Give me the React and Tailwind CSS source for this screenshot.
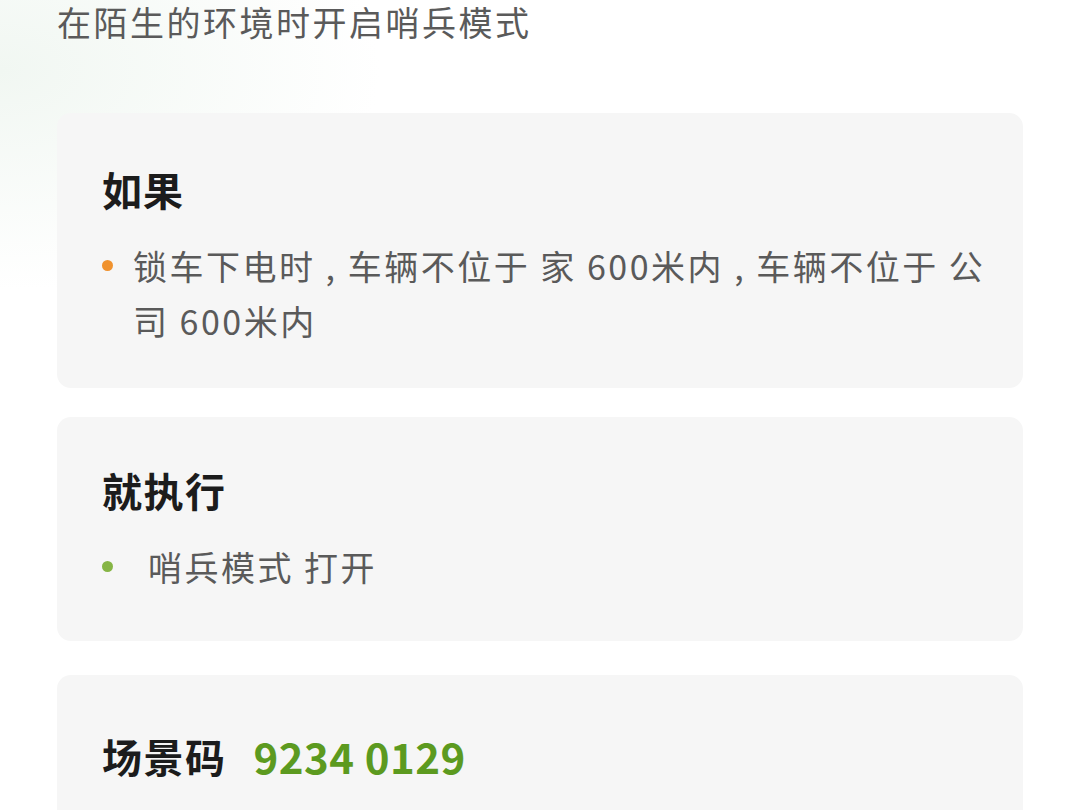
export default function App() {
  return (
    <div
      className="w-[1080px] h-[810px] overflow-hidden bg-white bg-[radial-gradient(ellipse_380px_220px_at_0px_70px,#f1f7f2_0%,rgba(255,255,255,0)_100%)] px-[57px]"
      style={{ fontFamily: '"Noto Sans CJK SC", "Noto Sans", sans-serif' }}
    >
      <div className="text-[34px] leading-[44px] text-[#5a5a5a] tracking-[2.5px] whitespace-nowrap">
        在陌生的环境时开启哨兵模式
      </div>

      <div className="mt-[69px] rounded-[14px] bg-[#f6f6f6] pl-[45px] pr-[28px] pt-[52px] pb-[40px]">
        <div className="text-[40px] leading-[48px] font-bold text-[#1c1c1c] tracking-[1px]">如果</div>
        <div className="mt-[25px] flex">
          <div className="w-[31px] shrink-0 pt-[22px]">
            <div className="w-[11px] h-[11px] rounded-full bg-[#f0922e]" />
          </div>
          <div className="text-[34px] leading-[55px] text-[#5a5a5a] tracking-[2.5px]">
            锁车下电时 , 车辆不位于 家 600米内 , 车辆不位于 公司 600米内
          </div>
        </div>
      </div>

      <div className="mt-[29px] rounded-[14px] bg-[#f6f6f6] pl-[45px] pr-[40px] pt-[49px] pb-[47px]">
        <div className="text-[40px] leading-[48px] font-bold text-[#1c1c1c] tracking-[1.5px]">就执行</div>
        <div className="mt-[25px] flex">
          <div className="w-[46px] shrink-0 pt-[22px]">
            <div className="w-[11px] h-[11px] rounded-full bg-[#86b545]" />
          </div>
          <div className="text-[34px] leading-[55px] text-[#5a5a5a] tracking-[2.5px]">
            哨兵模式 打开
          </div>
        </div>
      </div>

      <div className="mt-[34px] rounded-[14px] bg-[#f6f6f6] pl-[45px] pr-[40px] pt-[57px] pb-[60px]">
        <div className="flex items-center gap-[27px]">
          <span className="text-[40px] leading-[48px] font-bold text-[#1c1c1c] tracking-[1.5px]">场景码</span>
          <span className="text-[42px] leading-[48px] font-bold text-[#5c9a1f] tracking-[0.5px]">9234 0129</span>
        </div>
      </div>
    </div>
  );
}
